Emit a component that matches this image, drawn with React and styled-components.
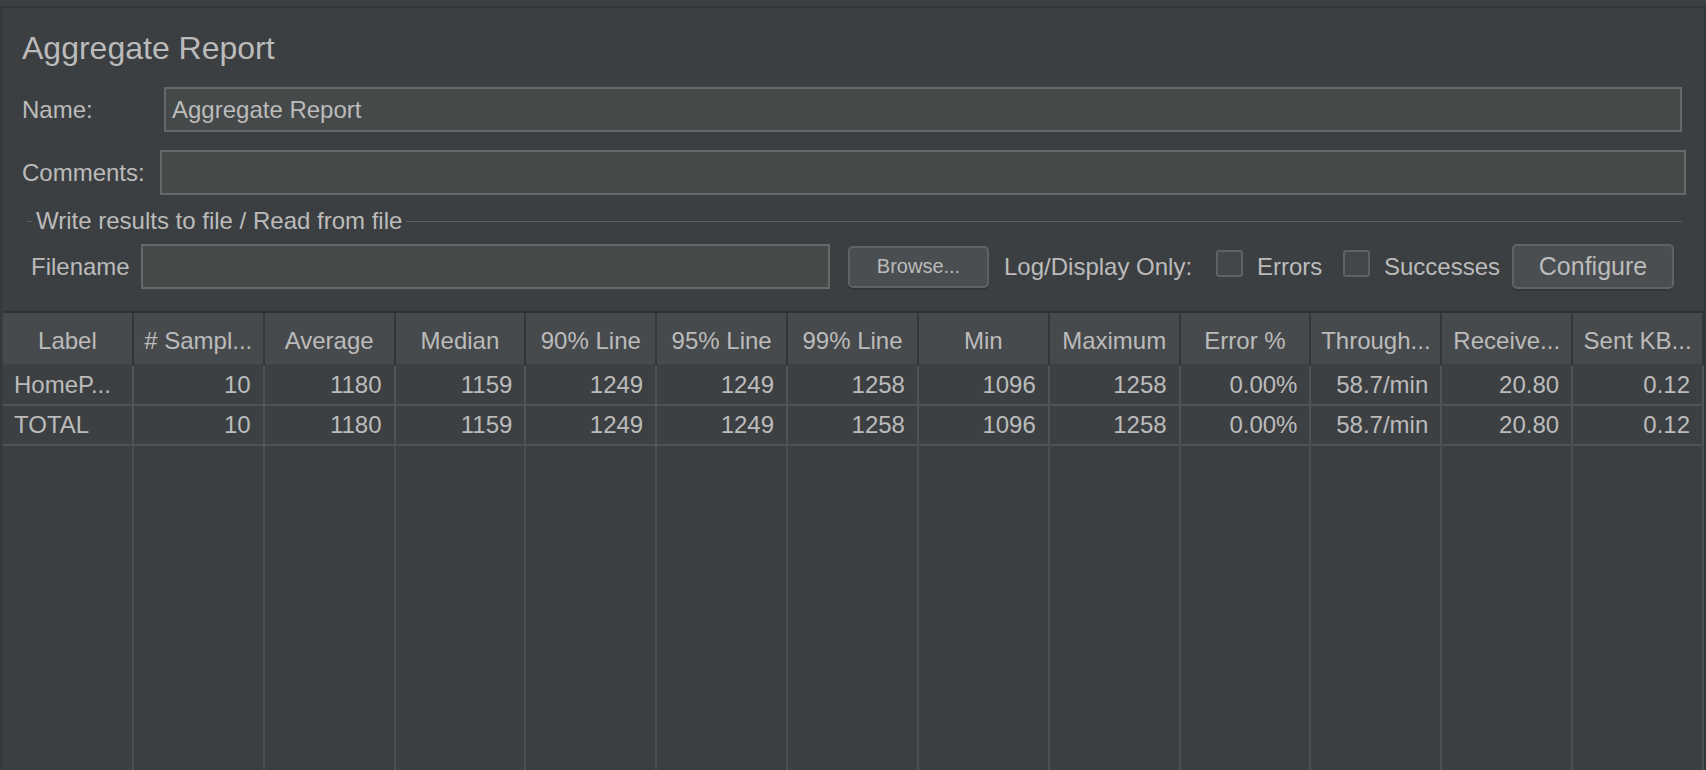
import React from 'react';
import styled, { createGlobalStyle } from 'styled-components';

const Global = createGlobalStyle`
  html, body { margin: 0; padding: 0; background: #3c3f41; }
  body { font-family: "Liberation Sans", Arial, Helvetica, sans-serif; color: #bbbbbb; }
  * { box-sizing: border-box; }
`;

const Frame = styled.div`
  width: 1706px;
  height: 770px;
  overflow: hidden;
  display: flex;
  flex-direction: column;
  background: #3c3f41;
`;

const TopStrip = styled.div`
  flex: none;
  height: 8px;
  background: #3d4043;
  border-bottom: 2px solid #333537;
`;

const Body = styled.div`
  flex: 1;
  min-height: 0;
  display: flex;
  flex-direction: column;
  border-left: 2px solid #35383a;
  border-right: 2px solid #35383a;
`;

const Title = styled.h1`
  margin: 24px 0 0 20px;
  font-size: 32px;
  line-height: 32px;
  font-weight: 400;
  color: #bbbbbb;
`;

const FieldRow = styled.div`
  display: flex;
  align-items: center;
  margin: ${p => p.$top}px ${p => p.$right}px 0 20px;
`;

const FieldLabel = styled.label`
  flex: none;
  width: ${p => p.$w}px;
  font-size: 24px;
  color: #bbbbbb;
`;

const TextInput = styled.div`
  flex: ${p => (p.$w ? 'none' : '1')};
  width: ${p => (p.$w ? `${p.$w}px` : 'auto')};
  height: 45px;
  display: flex;
  align-items: center;
  padding-left: 6px;
  background: #45494a;
  border: 2px solid #676767;
  font-size: 24px;
  color: #bbbbbb;
`;

const Legend = styled.div`
  display: flex;
  align-items: center;
  height: 24px;
  margin: 14px 22px 0 25px;
  gap: 4px;
  font-size: 24px;
  color: #bbbbbb;
`;

const LegendLine = styled.span`
  height: 1px;
  background: #5c5f61;
  flex: ${p => (p.$grow ? '1' : 'none')};
  width: ${p => (p.$grow ? 'auto' : '5px')};
`;

const FileRow = styled.div`
  display: flex;
  align-items: center;
  height: 45px;
  margin: 11px 0 0 29px;
`;

const Text = styled.span`
  flex: none;
  width: ${p => p.$w}px;
  margin-left: ${p => p.$ml || 0}px;
  font-size: 24px;
  white-space: nowrap;
  color: #bbbbbb;
`;

const Button = styled.button`
  flex: none;
  width: ${p => p.$w}px;
  height: ${p => p.$h}px;
  margin-left: ${p => p.$ml}px;
  padding: 0;
  font-family: inherit;
  font-size: ${p => p.$fs}px;
  color: #bbbbbb;
  background: #4a4e50;
  border: 2px solid #606263;
  border-radius: 5px;
  box-shadow: 0 2px 0 #333537;
`;

const Check = styled.span`
  flex: none;
  width: 27px;
  height: 27px;
  margin: 0 14px 6px 0;
  background: #43474a;
  border: 2px solid #5f6264;
  border-radius: 3px;
`;

const Table = styled.div`
  flex: 1;
  min-height: 0;
  display: flex;
  flex-direction: column;
  margin: 22px 0 0 1px;
  border-top: 2px solid #2f3133;
`;

const GridRow = styled.div`
  display: grid;
  grid-template-columns: repeat(13, 1fr);
  flex: ${p => (p.$fill ? '1' : 'none')};
`;

const HeadCell = styled.div`
  height: 53px;
  padding-top: 4px;
  display: flex;
  align-items: center;
  justify-content: center;
  background: #474a4c;
  border-right: 2px solid #34373a;
  border-bottom: 2px solid #3f4244;
  font-size: 24px;
  white-space: nowrap;
  overflow: hidden;
  color: #bbbbbb;
`;

const Cell = styled.div`
  height: 40px;
  display: flex;
  align-items: center;
  justify-content: ${p => (p.$left ? 'flex-start' : 'flex-end')};
  padding: 0 ${p => (p.$left ? 0 : 12)}px 0 ${p => (p.$left ? 11 : 0)}px;
  background: #3d4043;
  border-right: 2px solid #505356;
  border-bottom: 2px solid #505356;
  font-size: 24px;
  white-space: nowrap;
  overflow: hidden;
  color: #bbbbbb;
`;

const FillCell = styled.div`
  border-right: 2px solid #4b4e51;
  background: #3c3f41;
`;

const headers = [
  'Label', '# Sampl...', 'Average', 'Median', '90% Line', '95% Line', '99% Line',
  'Min', 'Maximum', 'Error %', 'Through...', 'Receive...', 'Sent KB...',
];

const rows = [
  ['HomeP...', '10', '1180', '1159', '1249', '1249', '1258', '1096', '1258', '0.00%', '58.7/min', '20.80', '0.12'],
  ['TOTAL', '10', '1180', '1159', '1249', '1249', '1258', '1096', '1258', '0.00%', '58.7/min', '20.80', '0.12'],
];

export default function App() {
  return (
    <Frame>
      <Global />
      <TopStrip />
      <Body>
        <Title>Aggregate Report</Title>
        <FieldRow $top={23} $right={22}>
          <FieldLabel $w={142}>Name:</FieldLabel>
          <TextInput>Aggregate Report</TextInput>
        </FieldRow>
        <FieldRow $top={18} $right={18}>
          <FieldLabel $w={138}>Comments:</FieldLabel>
          <TextInput />
        </FieldRow>
        <Legend>
          <LegendLine />
          <span>Write results to file / Read from file</span>
          <LegendLine $grow />
        </Legend>
        <FileRow>
          <Text $w={110}>Filename</Text>
          <TextInput $w={689} />
          <Button $w={141} $h={42} $ml={18} $fs={20}>Browse...</Button>
          <Text $w={212} $ml={15}>Log/Display Only:</Text>
          <Check />
          <Text $w={86}>Errors</Text>
          <Check />
          <Text $w={128}>Successes</Text>
          <Button $w={162} $h={45} $ml={0} $fs={25}>Configure</Button>
        </FileRow>
        <Table>
          <GridRow>
            {headers.map(h => <HeadCell key={h}>{h}</HeadCell>)}
          </GridRow>
          {rows.map((r, i) => (
            <GridRow key={i}>
              {r.map((c, j) => <Cell key={j} $left={j === 0}>{c}</Cell>)}
            </GridRow>
          ))}
          <GridRow $fill>
            {headers.map(h => <FillCell key={h} />)}
          </GridRow>
        </Table>
      </Body>
    </Frame>
  );
}
